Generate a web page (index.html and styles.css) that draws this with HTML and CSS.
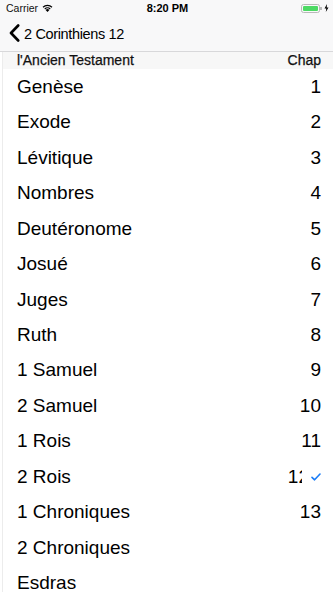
FILE: index.html
```html
<!DOCTYPE html>
<html>
<head>
<meta charset="utf-8">
<link rel="stylesheet" href="styles.css">
</head>
<body>
<div class="screen">
  <div class="statusbar">
    <div class="sb-left">
      <span class="carrier">Carrier</span>
      <svg class="wifi" width="11" height="8" viewBox="0 0 11 8"><path d="M5.5 8 L3.6 5.9 A2.7 2.7 0 0 1 7.4 5.9 Z" fill="#000"/><path d="M2.4 4.6 A4.4 4.4 0 0 1 8.6 4.6 L7.9 5.4 A3.4 3.4 0 0 0 3.1 5.4 Z" fill="#000"/><path d="M0.6 2.8 A7 7 0 0 1 10.4 2.8 L9.6 3.7 A5.8 5.8 0 0 0 1.4 3.7 Z" fill="#000"/></svg>
    </div>
    <div class="sb-time">8:20 PM</div>
    <div class="sb-right">
      <div class="battery"><div class="battery-fill"></div></div>
      <div class="battery-cap"></div>
      <svg class="bolt" width="5" height="8" viewBox="0 0 5 8"><path d="M3 0 L0.5 4.5 H2.3 L1.8 8 L4.5 3.4 H2.7 Z" fill="#000"/></svg>
    </div>
  </div>
  <div class="navbar">
    <svg class="chevron" width="11" height="18" viewBox="0 0 11 18"><path d="M9.2 1.5 L2 9 L9.2 16.5" fill="none" stroke="#000" stroke-width="2.6" stroke-linecap="round" stroke-linejoin="round"/></svg>
    <span class="nav-title">2 Corinthiens 12</span>
  </div>
  <div class="content">
    <div class="section-header">
      <span>l'Ancien Testament</span>
      <span>Chap</span>
    </div>
    <div class="row"><span class="name">Genèse</span><span class="num">1</span></div>
    <div class="row"><span class="name">Exode</span><span class="num">2</span></div>
    <div class="row"><span class="name">Lévitique</span><span class="num">3</span></div>
    <div class="row"><span class="name">Nombres</span><span class="num">4</span></div>
    <div class="row"><span class="name">Deutéronome</span><span class="num">5</span></div>
    <div class="row"><span class="name">Josué</span><span class="num">6</span></div>
    <div class="row"><span class="name">Juges</span><span class="num">7</span></div>
    <div class="row"><span class="name">Ruth</span><span class="num">8</span></div>
    <div class="row"><span class="name">1 Samuel</span><span class="num">9</span></div>
    <div class="row"><span class="name">2 Samuel</span><span class="num">10</span></div>
    <div class="row"><span class="name">1 Rois</span><span class="num">11</span></div>
    <div class="row checked"><span class="name">2 Rois</span><span class="num shifted">12</span>
      <div class="accessory">
        <svg class="check" width="10" height="8" viewBox="0 0 10 8"><path d="M1 4.3 L3.6 6.8 L9 1" fill="none" stroke="#1a7cf6" stroke-width="1.6" stroke-linecap="round" stroke-linejoin="round"/></svg>
      </div>
    </div>
    <div class="row"><span class="name">1 Chroniques</span><span class="num">13</span></div>
    <div class="row"><span class="name">2 Chroniques</span><span class="num"></span></div>
    <div class="row"><span class="name">Esdras</span><span class="num"></span></div>
  </div>
</div>
</body>
</html>
```

FILE: styles.css
```css
* { box-sizing: border-box; }
html, body { margin: 0; padding: 0; }
body {
  width: 333px;
  height: 592px;
  overflow: hidden;
  background: #fff;
  font-family: "Liberation Sans", Arial, sans-serif;
  color: #000;
}
.screen { width: 333px; height: 592px; overflow: hidden; }

.statusbar {
  height: 16px;
  background: #f8f8f9;
  display: flex;
  align-items: center;
  justify-content: space-between;
  padding: 0 4px 0 6px;
  font-size: 10.5px;
}
.sb-left { display: flex; align-items: center; gap: 4px; width: 90px; }
.carrier { color: #111; }
.sb-time { font-weight: bold; font-size: 11px; }
.sb-right { display: flex; align-items: center; justify-content: flex-end; width: 90px; }
.battery {
  width: 19px; height: 9px;
  border: 1px solid #b9b9b9;
  border-radius: 2.5px;
  padding: 1px;
}
.battery-fill { width: 100%; height: 100%; background: #4cd964; border-radius: 1px; }
.battery-cap { width: 1.5px; height: 3px; background: #b9b9b9; margin-right: 2px; }

.navbar {
  height: 35.5px;
  background: #f8f8f9;
  border-bottom: 1px solid #d8d8da;
  display: flex;
  align-items: center;
  padding-left: 9px;
  gap: 4px;
}
.nav-title { font-size: 14.5px; letter-spacing: -0.35px; margin-top: 1px; }

.content {
  border-left: 1px solid #ececec;
  margin-left: 2px;
}
.section-header {
  height: 17.7px;
  background: #f7f7f7;
  display: flex;
  align-items: center;
  justify-content: space-between;
  padding: 0 12px 0 14px;
  font-size: 14px;
  color: #111;
  -webkit-text-stroke: 0.25px #111;
}
.row {
  height: 35.45px;
  display: flex;
  align-items: center;
  justify-content: space-between;
  padding: 0 12px 0 14px;
  font-size: 19px;
  position: relative;
}
.num { text-align: right; }
.shifted { margin-right: 12px; }
.accessory {
  position: absolute;
  left: 299px;
  top: 0;
  bottom: 0;
  width: 22px;
  background: #fff;
  display: flex;
  align-items: center;
  justify-content: flex-end;
  padding-right: 3px;
}
```
